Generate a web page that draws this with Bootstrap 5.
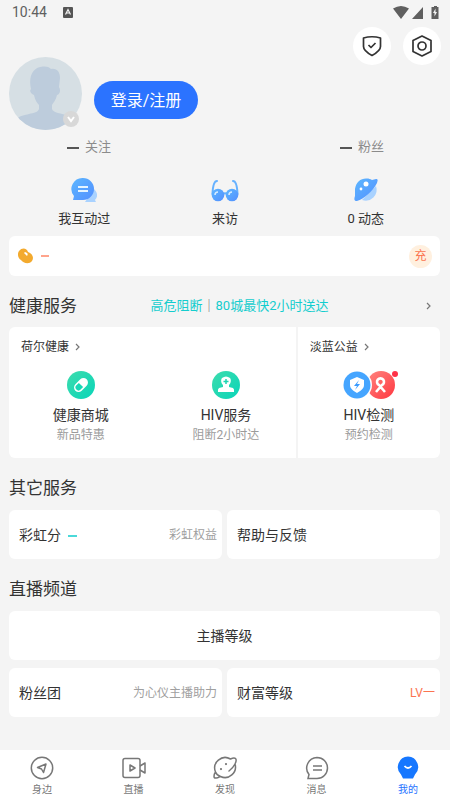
<!DOCTYPE html>
<html lang="zh-CN">
<head>
<meta charset="utf-8">
<meta name="viewport" content="width=device-width, initial-scale=1">
<title>我的</title>
<link href="https://cdn.jsdelivr.net/npm/bootstrap@5.3.0/dist/css/bootstrap.min.css" rel="stylesheet">
<style>
body{font-family:Roboto,"Noto Sans CJK SC",sans-serif;background:#f4f4f4;color:#333;font-size:14px;line-height:20px}
a{color:inherit;text-decoration:none}
a:hover{color:inherit}
svg{display:block;flex:none}
.page{min-height:100vh;padding-top:2px}
.status{height:20px;padding:0 11px 0 12px;color:#5f5f5f;font-size:14px}
.side{padding:0 10px 0 9px}
.round-btn{width:38px;height:38px;background:#fff}
.tools{gap:12px;height:38px;margin-top:5px;padding-right:9px}
.profile{gap:12px;margin-top:-8px}
.avatar{width:73px;height:73px}
.avatar-badge{right:3px;bottom:3px}
.login{width:104px;height:38px;background:#2b73ff;color:#fff;font-size:16px;padding:2px 0 0;margin-top:12px}
.login:hover{background:#1e66f2;color:#fff}
.follow{padding:0 66px 0 67px;margin-top:7px;color:#8b8b8b;font-size:13px}
.dash{display:inline-block;width:12px;height:2px;background:currentColor;vertical-align:middle}
.dark-dash{background:#555;margin-right:6px}
.cyan-dash{width:9px;background:#4bd9d9}
.orange-dash{width:8px;background:#ffa48c}
.stats{margin-top:20px;padding:0 14px}
.stats a{font-size:13px;width:33.333%;gap:6px}
.panel{background:#fff;border-radius:6px}
.coin{height:40px;padding:0 8px 0 9px;margin-top:7px}
.charge{width:23px;height:23px;background:#fff0df;color:#fb7450;font-size:12px}
.charge:hover{background:#ffe6cc;color:#fb7450}
.heading{font-size:17px;line-height:24px;margin:0;font-weight:400}
.section-head{margin-top:18px}
.cyan{color:#14cdce}
.tile .orange{color:#fb7450}
.promo{font-size:13px;margin-right:24px}
.health{height:131px;margin-top:9px}
.health-a{flex:288 1 0;border-right:2px solid #f4f4f4}
.health-b{flex:143 1 0}
.brand{font-size:12px;padding:10px 12px 0;gap:6px}
.service{margin-top:14px;font-size:14px}
.service small{font-size:12px;color:#9b9b9b;line-height:20px}
.service-icon{height:28px;margin-bottom:6px}
.after-head{margin-top:10px}
.pair{gap:5px}
.tile{height:49px;padding:0 5px 0 10px;font-size:14px;flex:1 1 0}
.tile small{font-size:12px;color:#a0a0a0}
.tabs{height:50px;padding:0 12px;background:#fff;font-size:10px;line-height:14px;color:#777}
.tabs a{width:60px;gap:3px;padding-top:6px}
.tabs .now{color:#1f73ff}
</style>
<script src="https://cdn.jsdelivr.net/npm/bootstrap@5.3.0/dist/js/bootstrap.bundle.min.js"></script>
</head>
<body>
<div class="page d-flex flex-column">
<div class="status d-flex align-items-center justify-content-between">
  <div class="d-flex align-items-center gap-3"><span>10:44</span>
    <svg width="10" height="11" viewBox="0 0 10 11"><rect width="10" height="11" rx="1" fill="#555"/><path d="M2.500 7.500 5 2.500l2.500 5M3.500 6h3" fill="none" stroke="#f4f4f4" stroke-width="1.200"/></svg></div>
  <svg width="46" height="15" viewBox="0 0 46 15" fill="#5f5f5f"><path d="M0 3.500Q8-1.500 16 3.500L8 14ZM30 2v12H19ZM39.500 2H41V1h3v1h1.500v12H38.500V2Z"/><path d="M42.500 3.500 40 8h1.500v3.500L44 7h-1.500Z" fill="#f4f4f4"/></svg>
</div>
<div class="tools d-flex justify-content-end">
  <button class="btn round-btn rounded-circle border-0 p-0 d-flex align-items-center justify-content-center" aria-label="安全"><svg width="20" height="22" viewBox="0 0 20 22" fill="none" stroke="#333" stroke-width="1.700" stroke-linejoin="round"><path d="M1.500 3Q10 .500 18.500 3v8.500c0 4-4 6.500-8.500 9-4.500-2.500-8.500-5-8.500-9Z"/><path d="m6.500 10 2.500 2.500 4.500-4.500"/></svg></button>
  <button class="btn round-btn rounded-circle border-0 p-0 d-flex align-items-center justify-content-center" aria-label="设置"><svg width="20" height="22" viewBox="0 0 20 22" fill="none" stroke="#333" stroke-width="1.700" stroke-linejoin="round"><path d="m10 1 9 4.500v11L10 21l-9-4.500v-11Z"/><circle cx="10" cy="11" r="4"/></svg></button>
</div>
<div class="profile side d-flex align-items-center">
  <div class="position-relative avatar"><svg class="w-100 h-100" viewBox="0 0 73 73"><defs><clipPath id="face"><circle cx="36.500" cy="36.500" r="36.500"/></clipPath></defs><g clip-path="url(#face)"><path fill="#d6dfe4" d="M0 0h73v73H0z"/><path fill="#bdccdc" d="M22 32c-3-13 2-22 12-22.500 4-.5 7 1 8 2.500 6-1 9 3 9 9l-1 9c2 3 1 7-2 8-1 5-4 8-5 10v4c1 4 9 4 17 7l8 5v12H8V62c2-3 8-4 12-5 5-1 9-2 10-5v-4c-2-2-4-5-5-10-3-1-5-4-3-6Z"/></g></svg>
    <svg class="position-absolute avatar-badge" width="16" height="16" viewBox="0 0 16 16"><circle cx="8" cy="8" r="8" fill="#d8d8d8"/><path d="m5 6 3 4 3-4" fill="none" stroke="#fff" stroke-width="2"/></svg></div>
  <button class="btn login rounded-pill border-0">登录/注册</button>
</div>
<div class="follow d-flex justify-content-between"><a href="#"><span class="dash dark-dash"></span>关注</a><a href="#"><span class="dash dark-dash"></span>粉丝</a></div>
<div class="stats d-flex">
 <a href="#" class="d-flex flex-column align-items-center"><svg width="26" height="26" viewBox="0 0 26 26"><defs><linearGradient id="blue" x2="1" y2="1"><stop stop-color="#5db7ff"/><stop offset="1" stop-color="#528fff"/></linearGradient></defs><path d="M23 12c4 4 4 8 1 11l1 2H14Z" fill="#a9d2ff"/><path d="M12 1a11 11 0 1 1 0 22H2l1-4A11 11 0 0 1 12 1Z" fill="url(#blue)"/><path d="M7 10h10M7 14h10" stroke="#e5f4ff" stroke-width="1.800"/></svg><span>我互动过</span></a>
 <a href="#" class="d-flex flex-column align-items-center"><svg width="28" height="26" viewBox="0 0 28 26"><g fill="none" stroke="#65b1ff" stroke-width="2" stroke-linecap="round"><path d="M1.500 17Q2 4 6 4m20.500 13Q26 4 22 4M12 17q2-1.500 4 0"/></g><circle cx="7" cy="18" r="6.300" fill="url(#blue)"/><circle cx="21" cy="18" r="6.300" fill="url(#blue)"/><path d="M4 18q0-3 3-3m11 3q0-3 3-3" stroke="#d5ecff" stroke-width="1.500" fill="none"/></svg><span>来访</span></a>
 <a href="#" class="d-flex flex-column align-items-center"><svg width="26" height="26" viewBox="0 0 26 26"><path d="M23 9a11 11 0 0 1-14 14Z" fill="#a9d2ff"/><path d="M2 12C3 5 8 1 14 1.500c2 0 3 .5 5 1.500l4-1c2 0 2 1 1 4C20 14 11 22 4 24c-3 0-3-2-2-5Z" fill="url(#blue)"/><circle cx="13" cy="7" r="2.500" fill="#fff"/><circle cx="8" cy="12" r="1.400" fill="#fff"/></svg><span>0 动态</span></a>
</div>
<main class="side flex-grow-1 pb-4">
 <div class="panel coin d-flex align-items-center justify-content-between">
  <div class="d-flex align-items-center gap-2"><svg width="15" height="16" viewBox="0 0 15 16"><path d="M1 3c3-4 8-3 9 1 5 2 6 6 4 9-3 4-9 2-11-1C0 10-1 6 1 3Z" fill="#f3aa2e"/><path d="m6 5 3 3q2-3-2-4" fill="#fff"/></svg><span class="dash orange-dash"></span></div>
  <button class="btn charge rounded-circle p-0 border-0 lh-1">充</button>
 </div>
 <div class="section-head d-flex align-items-center justify-content-between"><h2 class="heading">健康服务</h2><a href="#" class="cyan promo">高危阻断<span class="text-secondary">｜</span>80城最快2小时送达</a><a href="#" class="pe-2" aria-label="更多"><svg width="6" height="8" viewBox="0 0 6 8" fill="none" stroke="#777" stroke-width="1.200"><path d="m1 1 3 3-3 3"/></svg></a></div>
 <div class="panel health d-flex">
  <section class="health-a"><a class="brand d-flex align-items-center" href="#">荷尔健康<svg width="6" height="8" viewBox="0 0 6 8" fill="none" stroke="#777" stroke-width="1.200"><path d="m1 1 3 3-3 3"/></svg></a>
   <div class="d-flex service"><a href="#" class="w-50 d-flex flex-column align-items-center"><span class="service-icon"><svg width="28" height="28" viewBox="0 0 28 28"><defs><linearGradient id="green" x2="1" y2="1"><stop stop-color="#3ddcad"/><stop offset="1" stop-color="#09d5b9"/></linearGradient></defs><circle cx="14" cy="14" r="14" fill="url(#green)"/><g transform="rotate(-45 14 14)"><rect x="6" y="9.500" width="16" height="9" rx="4.500" fill="#fff"/><path d="M14 11h-3.500a3 3 0 0 0 0 6H14Z" fill="#18d7b5"/></g></svg></span><span>健康商城</span><small>新品特惠</small></a>
   <a href="#" class="w-50 d-flex flex-column align-items-center ps-1"><span class="service-icon"><svg width="28" height="28" viewBox="0 0 28 28"><circle cx="14" cy="14" r="14" fill="url(#green)"/><path d="M10 7q4-3 8 0c2 3 0 6-1 7v2l4 1q1.500 1 1 4H6q-.5-3 1-4l4-1v-2c-1-1-3-4-1-7Z" fill="#fff"/><path d="M14 8v5m-2.500-2.500h5" stroke="#1bd4b1" stroke-width="1.500"/></svg></span><span>HIV服务</span><small>阻断2小时达</small></a></div>
  </section>
  <section class="health-b"><a class="brand d-flex align-items-center" href="#">淡蓝公益<svg width="6" height="8" viewBox="0 0 6 8" fill="none" stroke="#777" stroke-width="1.200"><path d="m1 1 3 3-3 3"/></svg></a>
   <a href="#" class="service d-flex flex-column align-items-center"><span class="service-icon"><svg width="58" height="28" viewBox="0 0 58 28"><defs><linearGradient id="red" x2="1" y2="1"><stop stop-color="#ff8580"/><stop offset="1" stop-color="#ff3740"/></linearGradient></defs><circle cx="41" cy="14" r="14" fill="url(#red)"/><path d="m36 21 6-7a3.500 3.500 0 1 0-3 0l6 7" fill="none" stroke="#fff" stroke-width="2.600"/><circle cx="18" cy="14" r="14" fill="#fff"/><circle cx="17" cy="14" r="13.500" fill="#45a5ff"/><path d="m17 6 7 3v5c0 4-4 6-7 8-3-2-7-4-7-8V9Z" fill="#fff"/><path d="m19 9-5 6h3l-2 4 5-6h-3Z" fill="#389aff"/><circle cx="55" cy="3" r="3" fill="#ff3148"/></svg></span><span>HIV检测</span><small>预约检测</small></a>
  </section>
 </div>
 <h2 class="heading section-head">其它服务</h2>
 <div class="pair after-head d-flex"><a href="#" class="panel tile d-flex align-items-center justify-content-between"><span>彩虹分 <span class="dash cyan-dash ms-1"></span></span><small>彩虹权益</small></a><a href="#" class="panel tile d-flex align-items-center">帮助与反馈</a></div>
 <h2 class="heading section-head">直播频道</h2>
 <a href="#" class="panel tile after-head px-0 d-flex align-items-center justify-content-center">主播等级</a>
 <div class="pair d-flex mt-2"><a href="#" class="panel tile d-flex align-items-center justify-content-between"><span>粉丝团</span><small>为心仪主播助力</small></a><a href="#" class="panel tile d-flex align-items-center justify-content-between"><span>财富等级</span><small class="orange">LV一</small></a></div>
</main>
<nav class="tabs sticky-bottom d-flex justify-content-between">
 <a href="#" class="d-flex flex-column align-items-center"><svg width="24" height="24" viewBox="0 0 24 24" fill="none" stroke="#777" stroke-width="1.500" stroke-linejoin="round"><circle cx="12" cy="12" r="10.700"/><path d="m7.500 11.500 8.500-3.500-2.500 8.500-2-3.500Z"/></svg>身边</a>
 <a href="#" class="d-flex flex-column align-items-center"><svg width="24" height="24" viewBox="0 0 24 24" fill="none" stroke="#777" stroke-width="1.500" stroke-linejoin="round"><rect x="1" y="2.500" width="17" height="19" rx="2"/><path d="m18 10 5-3v10l-5-3M8 9l5 3-5 3Z"/></svg>直播</a>
 <a href="#" class="d-flex flex-column align-items-center"><svg width="24" height="24" viewBox="0 0 24 24" fill="none" stroke="#777" stroke-width="1.500" stroke-linecap="round"><path d="M17.500 3A10.500 10.500 0 0 0 2.500 16c-2 3-2 6 0 6 1.500.500 3-.500 5-1.500A10.500 10.500 0 0 0 22 8c1-2 1.500-4.500.500-5.500S19.500 2 17.500 3M22 8q-2 4-6 7M2.500 16q1 3 5 4.500"/><path d="M8 13v.1M13 8v.1" stroke-width="2.200"/></svg>发现</a>
 <a href="#" class="d-flex flex-column align-items-center"><svg width="24" height="24" viewBox="0 0 24 24" fill="none" stroke="#777" stroke-width="1.500"><path d="M12 1.500a10.500 10.500 0 1 1 0 21H3l1-4A10.500 10.500 0 0 1 12 1.500ZM8 10h9M8 14h9"/></svg>消息</a>
 <a href="#" class="now d-flex flex-column align-items-center" aria-current="page"><svg width="24" height="24" viewBox="0 0 24 24"><path d="M12 .500a10.500 10.500 0 0 1 7 18l-2 4H7l-2-4A10.500 10.500 0 0 1 12 .500Z" fill="#1677ff"/><path d="M8.500 10q3.500 4 7 0" fill="none" stroke="#fff" stroke-width="1.800"/></svg>我的</a>
</nav>
</div>
</body>
</html>
